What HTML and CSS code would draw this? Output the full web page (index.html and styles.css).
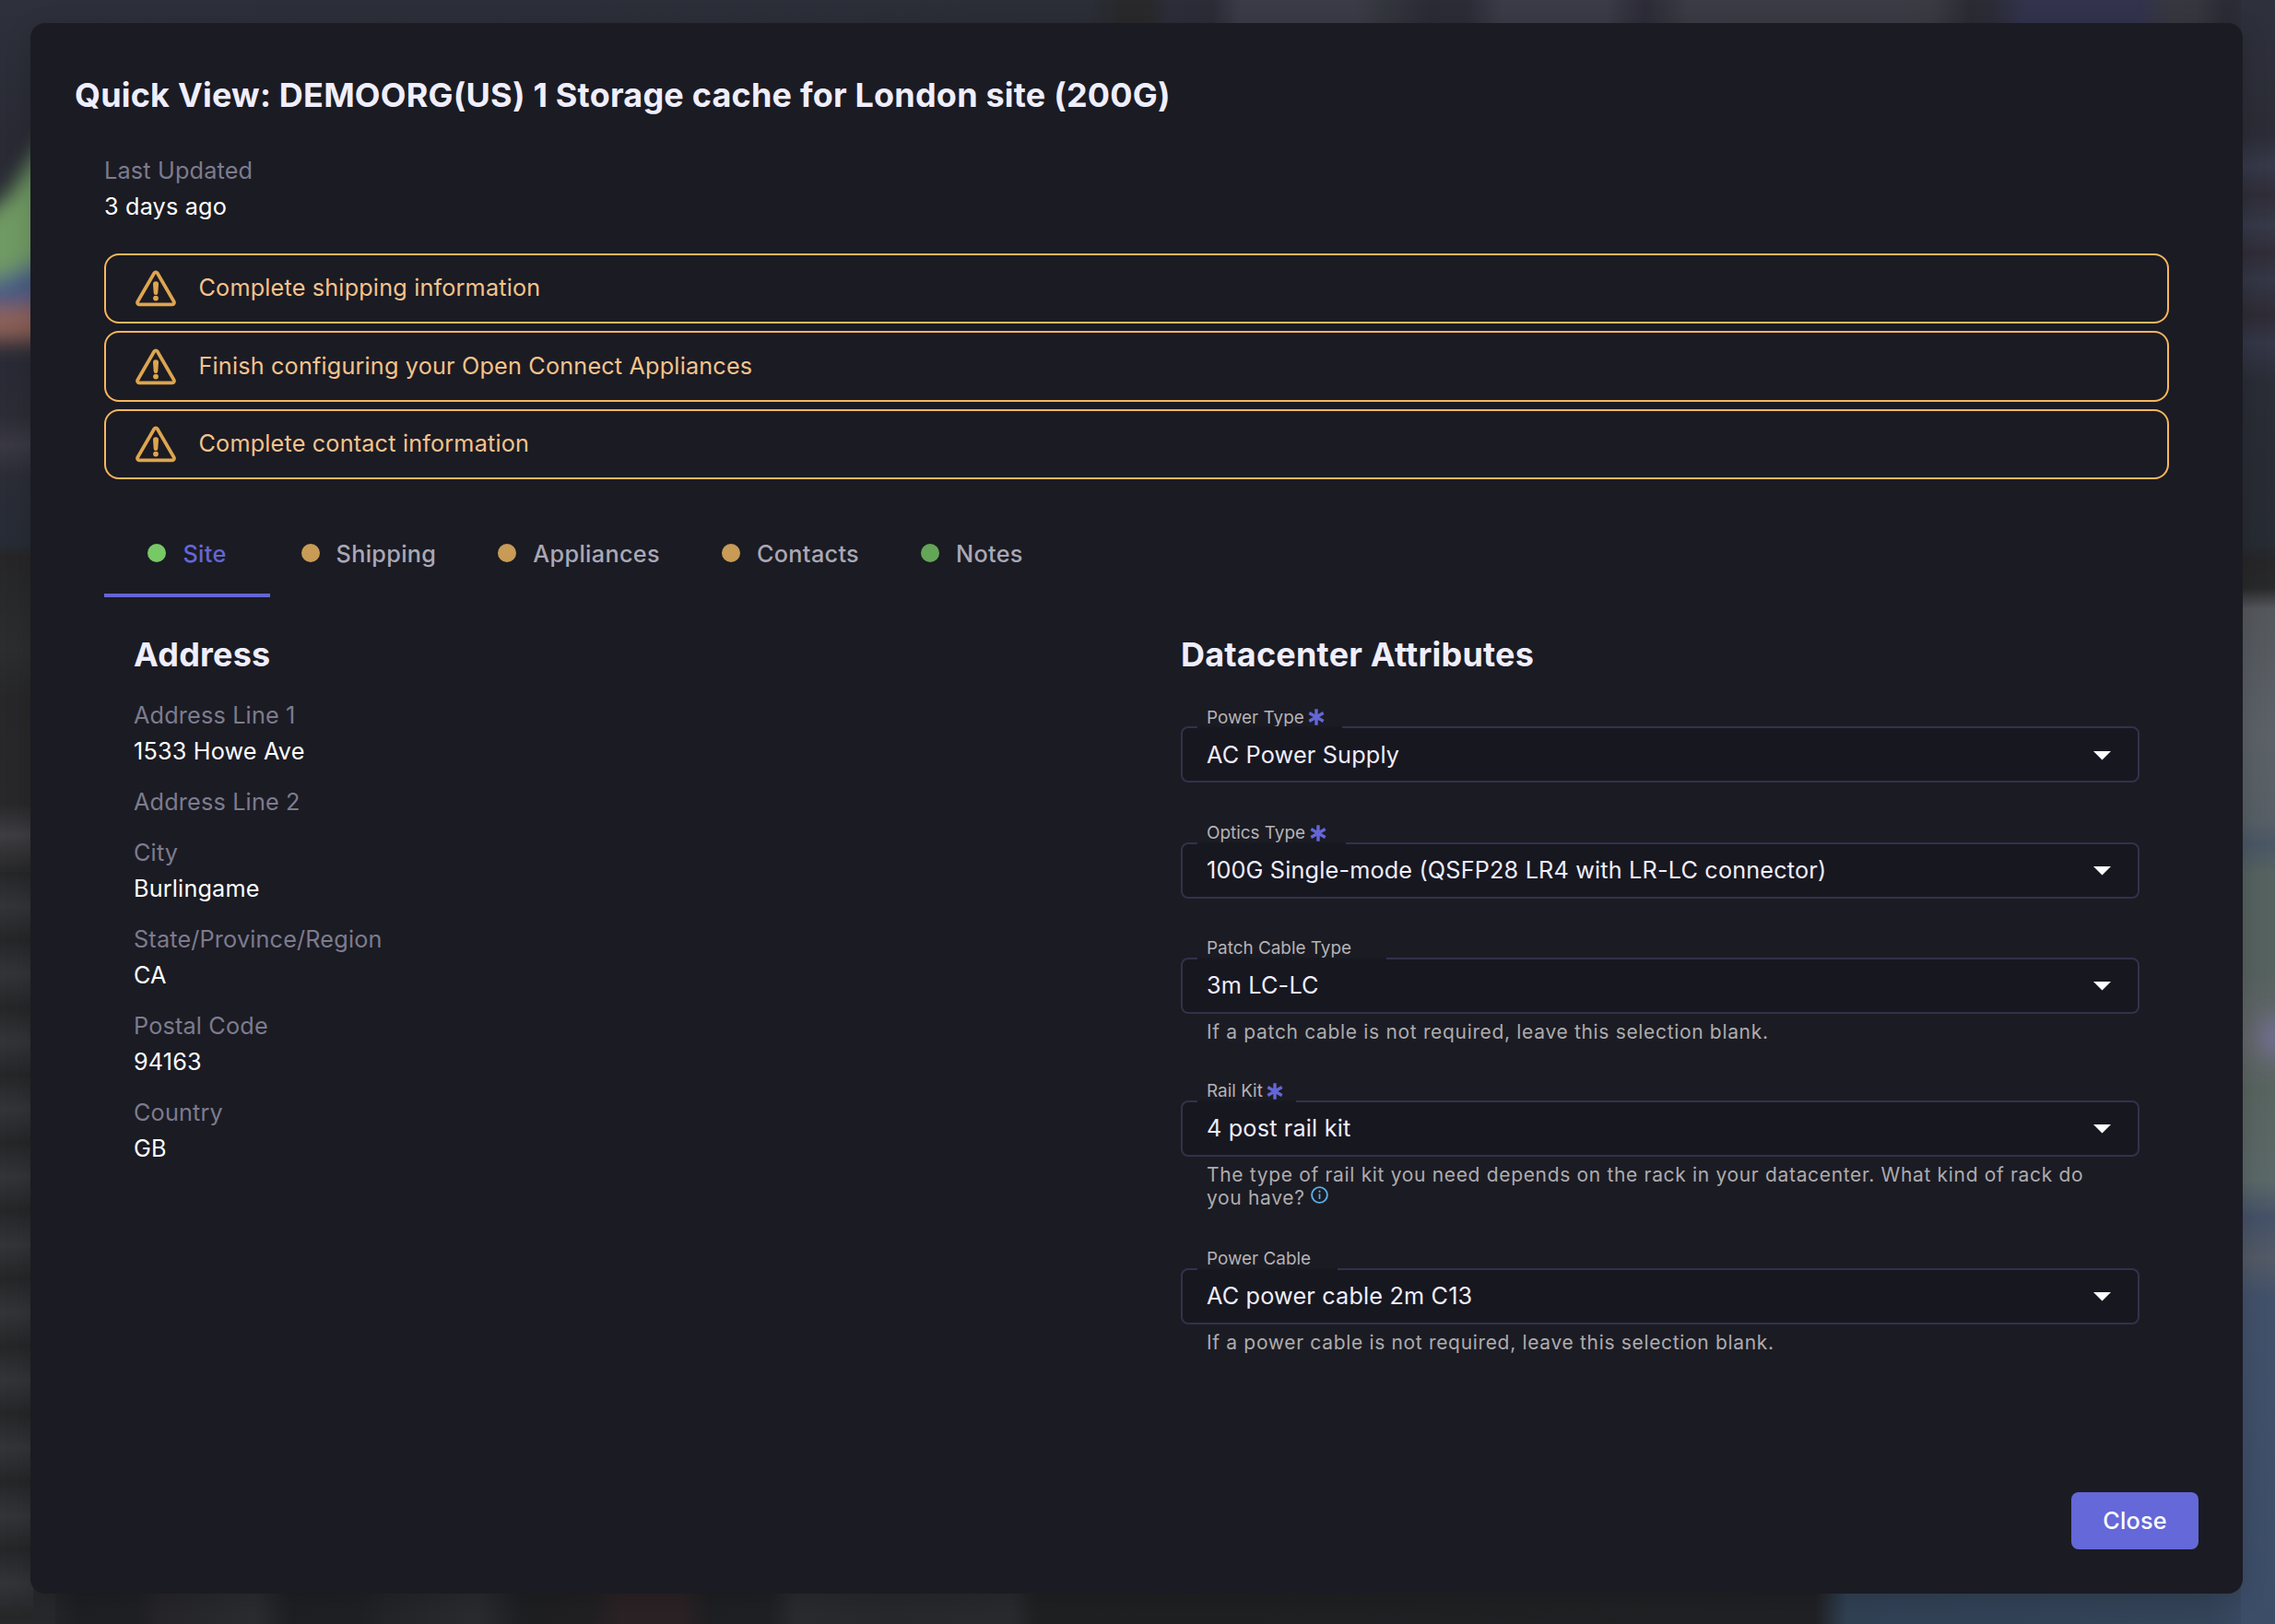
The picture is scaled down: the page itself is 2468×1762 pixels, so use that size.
FILE: index.html
```html
<!DOCTYPE html>
<html lang="en">
<head>
<meta charset="utf-8">
<title>Quick View</title>
<link rel="stylesheet" href="styles.css">
</head>
<body>
<svg class="backdrop" viewBox="0 0 2468 1762" aria-hidden="true">
  <defs>
    <linearGradient id="top" x1="0" x2="2468" y1="0" y2="0" gradientUnits="userSpaceOnUse">
      <stop offset="0" stop-color="#2d2f3a"/><stop offset=".48" stop-color="#2b2d37"/><stop offset=".492" stop-color="#29292c"/><stop offset=".505" stop-color="#29292c"/><stop offset=".514" stop-color="#2c2d38"/>
      <stop offset=".533" stop-color="#2c2c37"/><stop offset=".545" stop-color="#3a3b46"/><stop offset=".596" stop-color="#3a3b46"/><stop offset=".61" stop-color="#33353d"/><stop offset=".628" stop-color="#2b2b36"/>
      <stop offset=".645" stop-color="#2c2c37"/><stop offset=".66" stop-color="#3a3b46"/><stop offset=".706" stop-color="#3a3b46"/><stop offset=".723" stop-color="#2c2b37"/><stop offset=".742" stop-color="#3a3b44"/>
      <stop offset=".837" stop-color="#3b3b45"/><stop offset=".85" stop-color="#383a41"/><stop offset=".866" stop-color="#2b2b34"/><stop offset=".876" stop-color="#2c2c38"/><stop offset=".89" stop-color="#32334c"/>
      <stop offset=".94" stop-color="#32334c"/><stop offset=".955" stop-color="#37373f"/><stop offset=".966" stop-color="#36363e"/><stop offset=".978" stop-color="#2a2b35"/><stop offset="1" stop-color="#2e303b"/>
    </linearGradient>
    <linearGradient id="left" x1="0" x2="0" y1="0" y2="1762" gradientUnits="userSpaceOnUse">
      <stop offset="0" stop-color="#2e303b"/><stop offset=".09" stop-color="#292a34"/><stop offset=".23" stop-color="#292a35"/><stop offset=".256" stop-color="#2c2c36"/><stop offset=".274" stop-color="#393843"/><stop offset=".293" stop-color="#2b2c36"/>
      <stop offset=".335" stop-color="#262c35"/><stop offset=".342" stop-color="#262628"/><stop offset=".4" stop-color="#2b2d2f"/><stop offset=".43" stop-color="#272729"/><stop offset=".495" stop-color="#28282a"/><stop offset=".514" stop-color="#3e3d42"/><stop offset=".535" stop-color="#28292b"/>
      <stop offset="1" stop-color="#27282b"/>
    </linearGradient>
    <linearGradient id="ripple" x1="0" x2="0" y1="946" y2="1019.5" gradientUnits="userSpaceOnUse" spreadMethod="repeat">
      <stop offset="0" stop-color="#252628"/><stop offset=".25" stop-color="#2c2d30"/><stop offset=".5" stop-color="#333437"/><stop offset=".75" stop-color="#2c2d30"/><stop offset="1" stop-color="#252628"/>
    </linearGradient>
    <linearGradient id="right" x1="0" x2="0" y1="0" y2="1762" gradientUnits="userSpaceOnUse">
      <stop offset="0" stop-color="#2e303b"/><stop offset=".083" stop-color="#2b2c36"/><stop offset=".102" stop-color="#363949"/><stop offset=".12" stop-color="#2f2d38"/><stop offset=".139" stop-color="#363949"/><stop offset=".156" stop-color="#302d38"/><stop offset=".172" stop-color="#343746"/><stop offset=".194" stop-color="#2e2b35"/><stop offset=".211" stop-color="#343747"/><stop offset=".235" stop-color="#2a2c36"/>
      <stop offset=".335" stop-color="#272b33"/><stop offset=".345" stop-color="#262628"/><stop offset=".362" stop-color="#28292a"/><stop offset=".375" stop-color="#54575c"/><stop offset=".45" stop-color="#5b6167"/><stop offset=".505" stop-color="#575f66"/><stop offset=".52" stop-color="#4a5765"/><stop offset=".538" stop-color="#55625f"/><stop offset=".6" stop-color="#56625f"/><stop offset=".64" stop-color="#64666b"/><stop offset=".67" stop-color="#58645f"/>
      <stop offset=".727" stop-color="#5b6868"/><stop offset=".75" stop-color="#445167"/><stop offset=".775" stop-color="#535a66"/><stop offset=".798" stop-color="#42516a"/><stop offset="1" stop-color="#3c4d68"/>
    </linearGradient>
    <linearGradient id="bottom" x1="0" x2="2468" y1="0" y2="0" gradientUnits="userSpaceOnUse">
      <stop offset="0" stop-color="#2d2e31"/><stop offset=".015" stop-color="#29292c"/><stop offset=".035" stop-color="#1e1f22"/><stop offset=".06" stop-color="#1f2023"/><stop offset=".07" stop-color="#25252a"/><stop offset=".112" stop-color="#2b2c2f"/><stop offset=".128" stop-color="#1e1f22"/><stop offset=".158" stop-color="#1f2023"/><stop offset=".17" stop-color="#232428"/><stop offset=".21" stop-color="#2a2b2e"/><stop offset=".23" stop-color="#1e1f22"/>
      <stop offset=".258" stop-color="#201f22"/><stop offset=".272" stop-color="#2a2224"/><stop offset=".3" stop-color="#2a2224"/><stop offset=".312" stop-color="#1e1f22"/><stop offset=".338" stop-color="#1f2023"/><stop offset=".35" stop-color="#2a2b2e"/><stop offset=".39" stop-color="#27282b"/><stop offset=".445" stop-color="#292a2d"/><stop offset=".456" stop-color="#1f2022"/><stop offset=".798" stop-color="#202124"/><stop offset=".812" stop-color="#314154"/><stop offset=".97" stop-color="#344459"/><stop offset="1" stop-color="#3d4d68"/>
    </linearGradient>
    <filter id="soft" x="-100%" y="-60%" width="300%" height="220%"><feGaussianBlur stdDeviation="11"/></filter>
  </defs>
  <rect width="2468" height="60" fill="url(#top)"/>
  <rect y="1690" width="2468" height="72" fill="url(#bottom)"/>
  <rect width="60" height="1762" fill="url(#left)"/>
  <rect y="946" width="36" height="816" fill="url(#ripple)"/>
  <rect x="2431" width="37" height="1762" fill="url(#right)"/>
  <g filter="url(#soft)">
    <path d="M-40 250 L10 212 L50 150 L90 130 L90 300 L-40 310Z" fill="#6f9a63"/>
    <path d="M-40 308 L0 302 L70 272 L70 345 L-40 345Z" fill="#485c84"/>
    <path d="M-40 335 L70 328 L70 370 L-40 370Z" fill="#8d6156"/>
  </g>
  <ellipse cx="2466" cy="1125" rx="9" ry="24" fill="#7472a0" filter="url(#soft)"/>
</svg>

<main class="page">
  <section class="modal" role="dialog" aria-labelledby="title">
    <h1 class="modal-title" id="title">Quick View: DEMOORG(US) 1 Storage cache for London site (200G)</h1>

    <div class="modal-body">
      <dl class="entry updated"><dt>Last Updated</dt><dd>3 days ago</dd></dl>

      <div class="alerts">
        <div class="alert">
          <svg class="warn" viewBox="0 0 44 40"><path d="M20.3 3.2a2 2 0 0 1 3.4 0L41.7 34.3a2 2 0 0 1-1.7 3H4a2 2 0 0 1-1.7-3Z" fill="none" stroke="currentColor" stroke-width="3.7"/><path d="M19 15.2a3 3 0 0 1 6 0l-.7 9.6a2.3 2.3 0 0 1-4.6 0Z" fill="currentColor"/><circle cx="22" cy="30.6" r="2.9" fill="currentColor"/></svg>
          <span>Complete shipping information</span>
        </div>
        <div class="alert">
          <svg class="warn" viewBox="0 0 44 40"><path d="M20.3 3.2a2 2 0 0 1 3.4 0L41.7 34.3a2 2 0 0 1-1.7 3H4a2 2 0 0 1-1.7-3Z" fill="none" stroke="currentColor" stroke-width="3.7"/><path d="M19 15.2a3 3 0 0 1 6 0l-.7 9.6a2.3 2.3 0 0 1-4.6 0Z" fill="currentColor"/><circle cx="22" cy="30.6" r="2.9" fill="currentColor"/></svg>
          <span>Finish configuring your Open Connect Appliances</span>
        </div>
        <div class="alert">
          <svg class="warn" viewBox="0 0 44 40"><path d="M20.3 3.2a2 2 0 0 1 3.4 0L41.7 34.3a2 2 0 0 1-1.7 3H4a2 2 0 0 1-1.7-3Z" fill="none" stroke="currentColor" stroke-width="3.7"/><path d="M19 15.2a3 3 0 0 1 6 0l-.7 9.6a2.3 2.3 0 0 1-4.6 0Z" fill="currentColor"/><circle cx="22" cy="30.6" r="2.9" fill="currentColor"/></svg>
          <span>Complete contact information</span>
        </div>
      </div>

      <nav class="tabs">
        <a class="tab active"><i class="dot ok"></i>Site</a>
        <a class="tab"><i class="dot pending"></i>Shipping</a>
        <a class="tab"><i class="dot pending"></i>Appliances</a>
        <a class="tab"><i class="dot pending"></i>Contacts</a>
        <a class="tab"><i class="dot ok"></i>Notes</a>
      </nav>

      <div class="panel">
        <section class="address">
          <h2>Address</h2>
          <dl class="entry"><dt>Address Line 1</dt><dd>1533 Howe Ave</dd></dl>
          <dl class="entry"><dt>Address Line 2</dt></dl>
          <dl class="entry"><dt>City</dt><dd>Burlingame</dd></dl>
          <dl class="entry"><dt>State/Province/Region</dt><dd>CA</dd></dl>
          <dl class="entry"><dt>Postal Code</dt><dd>94163</dd></dl>
          <dl class="entry"><dt>Country</dt><dd>GB</dd></dl>
        </section>

        <section class="attributes">
          <h2>Datacenter Attributes</h2>
          <div class="field">
            <label>Power Type<svg class="req" viewBox="0 0 18 18"><path d="M9 .3v17.400M1.300 4.600l15.400 8.800M16.700 4.600l-15.400 8.800"/></svg></label>
            <div class="select" style="--notch:157px"><span>AC Power Supply</span><svg class="arrow" viewBox="0 0 19 10"><path d="M0 0h19L9.500 9.600Z"/></svg></div>
          </div>
          <div class="field">
            <label>Optics Type<svg class="req" viewBox="0 0 18 18"><path d="M9 .3v17.400M1.300 4.600l15.400 8.800M16.700 4.600l-15.400 8.800"/></svg></label>
            <div class="select" style="--notch:161px"><span>100G Single-mode (QSFP28 LR4 with LR-LC connector)</span><svg class="arrow" viewBox="0 0 19 10"><path d="M0 0h19L9.500 9.600Z"/></svg></div>
          </div>
          <div class="field">
            <label>Patch Cable Type</label>
            <div class="select" style="--notch:205px"><span>3m LC-LC</span><svg class="arrow" viewBox="0 0 19 10"><path d="M0 0h19L9.500 9.600Z"/></svg></div>
            <p class="hint">If a patch cable is not required, leave this selection blank.</p>
          </div>
          <div class="field">
            <label>Rail Kit<svg class="req" viewBox="0 0 18 18"><path d="M9 .3v17.400M1.300 4.600l15.400 8.800M16.700 4.600l-15.400 8.800"/></svg></label>
            <div class="select" style="--notch:107px"><span>4 post rail kit</span><svg class="arrow" viewBox="0 0 19 10"><path d="M0 0h19L9.500 9.600Z"/></svg></div>
            <p class="hint tall">The type of rail kit you need depends on the rack in your datacenter. What kind of rack do<br>you have? <svg class="info" viewBox="0 0 19 19"><circle cx="9.500" cy="9.500" r="8.400" fill="none" stroke="currentColor" stroke-width="1.900"/><path d="M9.500 8.300v5.700" stroke="currentColor" stroke-width="1.700"/><circle cx="9.500" cy="5.700" r="1.100" fill="currentColor"/></svg></p>
          </div>
          <div class="field">
            <label>Power Cable</label>
            <div class="select" style="--notch:152px"><span>AC power cable 2m C13</span><svg class="arrow" viewBox="0 0 19 10"><path d="M0 0h19L9.500 9.600Z"/></svg></div>
            <p class="hint">If a power cable is not required, leave this selection blank.</p>
          </div>
        </section>
      </div>
    </div>

    <footer class="modal-footer"><button class="close">Close</button></footer>
  </section>
</main>
</body>
</html>
```
FILE: styles.css
```css
* { box-sizing: border-box; }

body {
  margin: 0;
  background: #27282c;
  color: #fff;
  font: 400 25.25px/39px Inter, "Liberation Sans", sans-serif;
  letter-spacing: 0.16px;
  overflow: hidden;
}

h1, h2, p, dl, dd { margin: 0; }

.backdrop {
  position: absolute;
  inset: 0;
  width: 2468px;
  height: 1762px;
}

.page {
  position: relative;
  height: 1762px;
  padding: 25px 35px 33px 33px;
}

.modal {
  display: flex;
  flex-direction: column;
  height: 100%;
  padding: 51px 48px 48px;
  border-radius: 16px;
  background: #1b1b23;
  box-shadow: 0 6px 28px rgba(0, 0, 0, 0.16);
}

h1, h2 {
  color: #efeefc;
  font-size: 36px;
  font-weight: 700;
  line-height: 54px;
  letter-spacing: 0.2px;
}

.modal-body { padding: 36px 32px 0; }

.entry dt { color: #7d7b8e; }
.updated { margin-bottom: 31px; }

.alerts {
  display: flex;
  flex-direction: column;
  gap: 8px;
}

.alert {
  display: flex;
  align-items: center;
  gap: 24.5px;
  height: 76.4px;
  padding: 0 32px 1px;
  border: 2px solid #f6b65e;
  border-radius: 16px;
  color: #f4c38c;
}

.warn {
  width: 44px;
  height: 40px;
  margin-top: 1px;
  color: #dda550;
}

.tabs {
  display: flex;
  margin-top: 33px;
}

.tab {
  display: flex;
  align-items: center;
  justify-content: center;
  gap: 18px;
  height: 95px;
  padding: 5px 33.5px 0;
  border-bottom: 4px solid transparent;
  color: #a9a8b6;
  font-weight: 500;
  letter-spacing: 0.32px;
}

.tab.active {
  width: 180px;
  border-color: #6466d6;
  color: #6466d6;
}

.dot {
  width: 20px;
  height: 20px;
  margin-top: -2px;
  border-radius: 50%;
}

.dot.ok { background: #64a658; }
.dot.pending { background: #c89b56; }
.active .dot.ok { background: #77c966; }

.panel {
  display: grid;
  grid-template-columns: 1136px 1040px;
  padding: 34.5px 32px 0;
}

.address h2 { margin-bottom: 20.5px; }
.address .entry { margin-bottom: 16px; }

.attributes h2 { margin-bottom: 32px; }

.field { margin-bottom: 44.9px; }

.field label {
  display: flex;
  align-items: center;
  gap: 4.5px;
  height: 19.5px;
  padding-left: 28px;
  color: #b4b3b6;
  font-size: 18.9px;
  line-height: 19.5px;
  letter-spacing: 0;
}

.req {
  width: 18px;
  height: 18px;
  fill: none;
  stroke: #6466d6;
  stroke-width: 3.4;
}

.select {
  position: relative;
  display: flex;
  align-items: center;
  justify-content: space-between;
  height: 61px;
  padding: 0 29px 0 26px;
  border: 2px solid #33314a;
  border-radius: 8px;
  background: #171720;
  color: #efeefc;
}

.select span { padding-top: 1px; }

.select::before {
  content: "";
  position: absolute;
  top: -2px;
  left: 16px;
  width: var(--notch);
  height: 2px;
  background: #181821;
}

.arrow {
  width: 19px;
  height: 10px;
  margin-top: 2px;
  fill: #fff;
}

.hint {
  margin: 7px 0 -2.6px;
  padding-left: 28px;
  color: #adacae;
  font-size: 21px;
  line-height: 25px;
  letter-spacing: 0.67px;
  white-space: nowrap;
}

.hint.tall { height: 52px; }

.info {
  width: 19px;
  height: 19px;
  vertical-align: 1px;
  color: #58b0ea;
}

.modal-footer {
  display: flex;
  justify-content: flex-end;
  margin-top: auto;
}

.close {
  width: 138px;
  height: 62px;
  padding: 0;
  border: 0;
  border-radius: 8px;
  background: #6468d8;
  color: #fff;
  font: 500 25.25px/39px Inter, "Liberation Sans", sans-serif;
  letter-spacing: 0.2px;
}
```
